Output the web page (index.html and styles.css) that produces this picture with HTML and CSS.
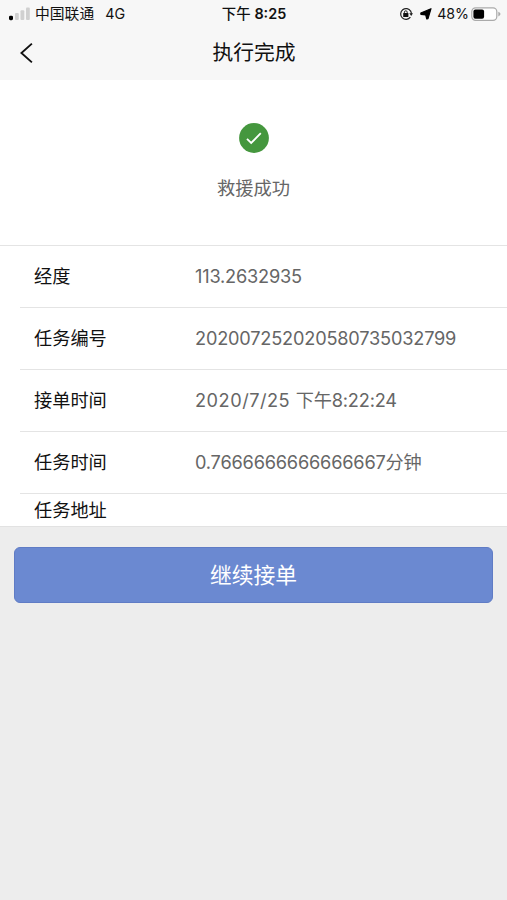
FILE: index.html
```html
<!DOCTYPE html>
<html lang="zh-CN">
<head>
<meta charset="utf-8">
<meta name="viewport" content="width=device-width, initial-scale=1">
<title>执行完成</title>
<link rel="stylesheet" href="styles.css">
</head>
<body>
<header class="header">
  <div class="status">
    <div class="status-left">
      <svg class="signal" width="22" height="14" viewBox="0 0 22 14"><rect x="0" y="8.7" width="4" height="4.5" rx="1.4" fill="#000"/><g fill="#d0d0d0"><rect x="6" y="6" width="3.8" height="7" rx="1"/><rect x="11.5" y="3.3" width="3.8" height="9.7" rx="1"/><rect x="17" y=".5" width="3.8" height="12.5" rx="1"/></g></svg>
      <span class="carrier">中国联通</span>
      <span class="network">4G</span>
    </div>
    <div class="status-time">下午 <b>8:25</b></div>
    <div class="status-right">
      <svg class="lock" width="14" height="14" viewBox="0 0 14 14" fill="none" stroke="#222" stroke-width="1.2"><path d="M11.7 4.2A5.4 5.4 0 1 0 11.4 10.2"/><path d="M10.3 6.2H14l-1.8 2.9z" fill="#222" stroke="none"/><path d="M11.5 3.7q1 1.6.8 3.4"/><rect x="4.2" y="6" width="5.2" height="4" rx=".5" fill="#111" stroke="none"/><path d="M5.4 6.4V5.2a1.4 1.4 0 0 1 2.8 0v1.2" stroke-width="1"/></svg>
      <svg class="arrow" width="12" height="12" viewBox="0 0 12 12"><path d="M11 .7 8 10.6 6.8 11 5.7 6.9.9 6.3.8 5z" fill="#000" stroke="#000" stroke-width="1.2" stroke-linejoin="round"/></svg>
      <span class="percent">48%</span>
      <svg class="battery" width="30" height="15" viewBox="0 0 30 15"><rect x=".8" y=".8" width="25" height="12.6" rx="3.8" fill="#fff" stroke="#aaa" stroke-width="1.2"/><rect x="2.4" y="2.4" width="10.7" height="9.3" rx="2" fill="#000"/><path d="M27.3 4.8q2.2.8 2.2 2.3t-2.2 2.3z" fill="#aaa"/></svg>
    </div>
  </div>
  <nav class="nav">
    <svg class="back" width="14" height="22" viewBox="0 0 14 22"><path d="M11.9 1.6 1.4 11l10.5 9.4" fill="none" stroke="#111" stroke-width="1.9"/></svg>
    <h1 class="title">执行完成</h1>
  </nav>
</header>
<main>
  <section class="result">
    <svg width="30" height="30" viewBox="0 0 30 30"><circle cx="15" cy="15" r="14.9" fill="#45973e"/><path d="m8 15.8 4.2 4.2 9.6-9.8" fill="none" stroke="#fff" stroke-width="1.8"/></svg>
    <p class="message">救援成功</p>
  </section>
  <dl class="details">
    <div class="row"><dt>经度</dt><dd>113.2632935</dd></div>
    <div class="row"><dt>任务编号</dt><dd>202007252020580735032799</dd></div>
    <div class="row"><dt>接单时间</dt><dd><span class="date">2020/7/25 </span>下午8:22:24</dd></div>
    <div class="row"><dt>任务时间</dt><dd>0.7666666666666667分钟</dd></div>
    <div class="row short"><dt>任务地址</dt><dd></dd></div>
  </dl>
  <button class="continue" type="button">继续接单</button>
</main>
</body>
</html>
```
FILE: styles.css
```css
* { box-sizing: border-box; }
body {
  margin: 0;
  min-height: 100vh;
  background: #ededed;
  color: #111;
  font-family: Inter, "Noto Sans CJK SC", sans-serif;
}
.header { height: 80px; background: #f7f7f7; }
.status {
  display: grid;
  grid-template-columns: 1fr auto 1fr;
  align-items: center;
  height: 28px;
  padding: 0 6px 0 9px;
  font-size: 14.5px;
  line-height: 28px;
  white-space: nowrap;
}
.status-left, .status-right { display: flex; align-items: center; }
.status-right { justify-content: flex-end; }
.signal { margin-right: 4px; }
.carrier { font-size: 14.8px; }
.network { margin-left: 11px; font-size: 14.3px; }
.status-time { padding-right: 2px; font-size: 14.4px; font-weight: 500; }
.status-time b { font-weight: 600; }
.arrow { margin: 0 5px 0 7px; }
.percent { margin-right: 2px; font-size: 14.2px; }
.nav {
  display: grid;
  grid-template-columns: 14px 1fr 14px;
  align-items: center;
  height: 50px;
  padding: 0 20px;
}
.title {
  margin: 0;
  padding-left: 1px;
  font-size: 20.8px;
  font-weight: 400;
  line-height: 50px;
  text-align: center;
}
.result {
  display: flex;
  flex-direction: column;
  align-items: center;
  height: 165px;
  padding-top: 43px;
  background: #fff;
}
.message { margin: 21px 0 0; color: #666; font-size: 18.3px; line-height: 28px; }
.details {
  margin: 0;
  background: #fff;
  border-top: 1px solid #e4e4e4;
  border-bottom: 1px solid #e2e2e2;
}
.row {
  display: flex;
  align-items: center;
  height: 62px;
  margin-left: 20px;
  padding: 0 0 2px 14px;
  border-bottom: 1px solid #e4e4e4;
  font-size: 18.2px;
  line-height: 28px;
}
.row.short { height: 32px; padding-bottom: 0; border-bottom: 0; }
dt { width: 161px; }
dd { margin: 0; color: #666; letter-spacing: -0.2px; }
.date { letter-spacing: 0.5px; }
.continue {
  display: block;
  width: calc(100% - 28px);
  height: 56px;
  margin: 20px 14px 0;
  padding: 0 0 3px;
  border: 1px solid #607cc5;
  border-radius: 6px;
  background: #6b89d1;
  color: #fff;
  font: inherit;
  font-size: 21.8px;
}
```
